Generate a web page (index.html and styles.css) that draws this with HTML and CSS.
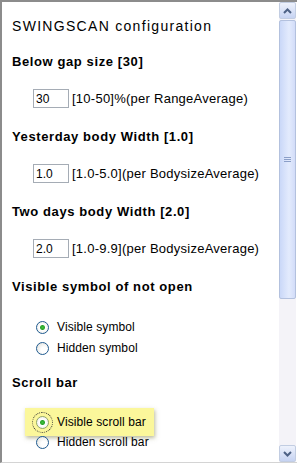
FILE: index.html
```html
<!DOCTYPE html>
<html lang="en">
<head>
  <meta charset="UTF-8" />
  <title>SWINGSCAN configuration</title>
  <link rel="stylesheet" href="styles.css">
</head>
<body>
  <div class="frame">
    <div class="content">
      <div class="title">SWINGSCAN configuration</div>

      <div class="label">Below gap size [30]</div>
      <div class="field">
        <input type="text" value="30" />
        <span>[10-50]%(per RangeAverage)</span>
      </div>

      <div class="label">Yesterday body Width [1.0]</div>
      <div class="field">
        <input type="text" value="1.0" />
        <span>[1.0-5.0](per BodysizeAverage)</span>
      </div>

      <div class="label">Two days body Width [2.0]</div>
      <div class="field">
        <input type="text" value="2.0" />
        <span>[1.0-9.9](per BodysizeAverage)</span>
      </div>

      <div class="label">Visible symbol of not open</div>
      <div class="options">
        <label class="option"><input type="radio" name="sym" checked /> Visible symbol</label>
        <label class="option"><input type="radio" name="sym" /> Hidden symbol</label>
      </div>

      <div class="label">Scroll bar</div>
      <div class="options">
        <label class="option hot"><input type="radio" name="bar" checked class="focus" /> Visible scroll bar</label>
        <label class="option"><input type="radio" name="bar" /> Hidden scroll bar</label>
      </div>
    </div>

    <div class="scrollbar">
      <div class="sbtn">
        <svg width="9" height="6" viewBox="0 0 9 6"><path d="M1 5 L4.5 1.5 L8 5" fill="none" stroke="#4d6185" stroke-width="2"/></svg>
      </div>
      <div class="thumb"><span class="grip"></span></div>
      <div class="track"></div>
      <div class="sbtn">
        <svg width="9" height="6" viewBox="0 0 9 6"><path d="M1 1 L4.5 4.5 L8 1" fill="none" stroke="#4d6185" stroke-width="2"/></svg>
      </div>
    </div>
  </div>
</body>
</html>
```

FILE: styles.css
```css
body {
  margin: 0;
  background: #fff;
  font-family: "Liberation Sans", Arial, sans-serif;
  color: #000;
}
.frame {
  width: 295px;
  height: 460px;
  border-left: 2px solid #8c8c8c;
  border-top: 2px solid #8c8c8c;
  border-bottom: 1px solid #d4d4d4;
  display: flex;
  overflow: hidden;
}
.content {
  flex: 1;
  padding: 14px 0 0 10px;
}
.title {
  font-size: 14px;
  letter-spacing: 1.3px;
  height: 20px;
  line-height: 20px;
  margin-bottom: 16px;
}
.label {
  font-size: 13px;
  font-weight: bold;
  letter-spacing: 0.6px;
  height: 20px;
  line-height: 20px;
}
.field {
  display: flex;
  align-items: center;
  gap: 3px;
  margin: 17px 0 19px 21px;
  font-size: 13px;
  height: 19px;
}
.field input {
  width: 30px;
  height: 17px;
  padding: 0 2px;
  border: 1px solid #a5acb5;
  font-family: "Liberation Sans", Arial, sans-serif;
  font-size: 12px;
  margin: 0;
}
.field span {
  letter-spacing: 0.25px;
}
.options {
  display: flex;
  flex-direction: column;
  gap: 3px;
  margin: 21px 0 16px 24px;
}
.option {
  display: flex;
  align-items: center;
  gap: 8px;
  font-size: 12px;
  letter-spacing: 0.1px;
  height: 18px;
  width: max-content;
}
.option input {
  appearance: none;
  width: 13px;
  height: 13px;
  margin: 0;
  border: 1px solid #1f5a8f;
  border-radius: 50%;
  background: radial-gradient(circle at 65% 65%, #ffffff 30%, #dcdcd6 100%);
}
.option input:checked {
  background: radial-gradient(circle, #3fc13f 0, #2aa42a 2px, #ffffff 3px, #e8e8e2 100%);
}
.option.hot {
  background: #fbf79b;
  box-shadow: 1px 2px 4px rgba(120, 120, 60, 0.5);
  margin: -6px 0 -6px -11px;
  padding: 5px 8px 5px 11px;
}
.option.hot input.focus {
  outline: 1px dotted #333;
  outline-offset: 3px;
  border-color: #8fa66a;
}
.scrollbar {
  width: 17px;
  margin-right: 1px;
  display: flex;
  flex-direction: column;
  background: #f4f3f8;
}
.sbtn {
  height: 15px;
  border: 1px solid #c2cde2;
  border-radius: 2px;
  background: linear-gradient(#eef2fc, #c6d3f2);
  display: flex;
  align-items: center;
  justify-content: center;
}
.thumb {
  height: 277px;
  margin-top: 1px;
  border: 1px solid #b3c1de;
  border-radius: 2px;
  background: linear-gradient(90deg, #cad8f8, #e3ebfd 60%, #d2dcf8);
  display: flex;
  align-items: center;
  justify-content: center;
}
.grip {
  width: 7px;
  height: 5px;
  background: repeating-linear-gradient(#8b9fc8 0 1px, transparent 1px 2px);
}
.track {
  flex: 1;
}
```
